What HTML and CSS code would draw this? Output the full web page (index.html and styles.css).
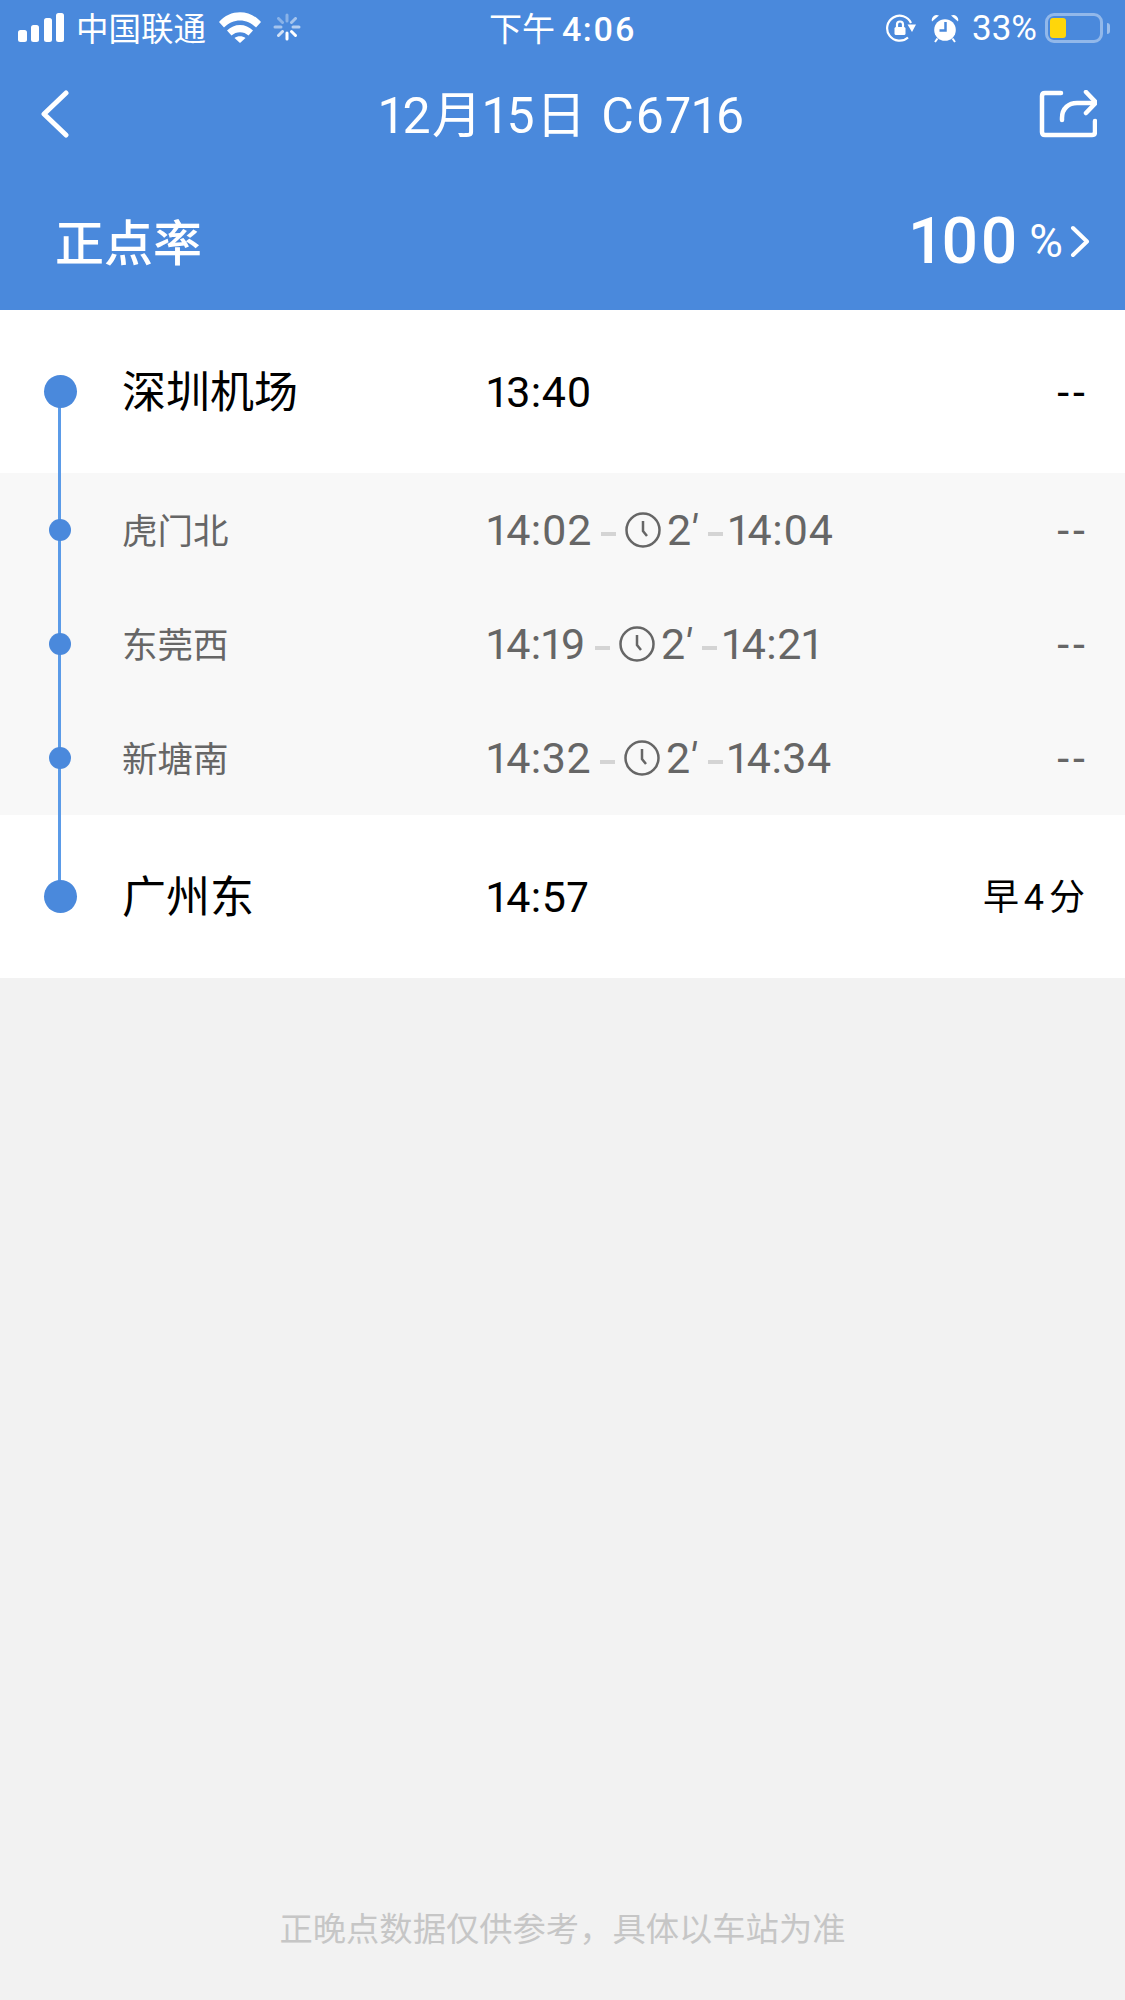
FILE: index.html

```html
<!DOCTYPE html>
<html lang="zh-CN">
<head>
<meta charset="utf-8">
<title>C6716</title>
<link rel="stylesheet" href="styles.css">
</head>
<body>

<div class="head">
    <div class="status">
        <div class="status-left">
            <svg class="ic-signal" width="47" height="30" viewBox="0 0 47 30">
                <rect x="0" y="17" width="9" height="12" rx="2.5"/>
                <rect x="13" y="12" width="8" height="17" rx="2.5"/>
                <rect x="26" y="5" width="8" height="24" rx="2.5"/>
                <rect x="38" y="0" width="8" height="29" rx="2.5"/>
            </svg>
            <span class="carrier">中国联通</span>
            <svg class="ic-wifi" width="42" height="31" viewBox="0 0 42 31" fill="#fff">
                <path d="M0 10 C11 -3 31 -3 42 10 L37 15.500 C28 6 14 6 5 15.500 Z"/>
                <path d="M8 18.500 C15 11 27 11 34 18.500 L29.500 23.500 C25 19 17 19 12.500 23.500 Z"/>
                <path d="M15.500 26 C18.500 23.500 23.500 23.500 26.500 26 L21 31 Z"/>
            </svg>
            <svg class="ic-spin" width="28" height="28" viewBox="0 0 28 28" stroke="#fff" stroke-width="3" stroke-linecap="round">
                <path d="M14 20 V26"/>
                <path d="M18.500 18.500 L22.500 22.500"/>
                <path d="M9.500 18.500 L5.500 22.500" opacity=".75"/>
                <path d="M20 14 H26" opacity=".6"/>
                <path d="M8 14 H2" opacity=".5"/>
                <path d="M18.500 9.500 L22.500 5.500" opacity=".5"/>
                <path d="M9.500 9.500 L5.500 5.500" opacity=".35"/>
                <path d="M14 8 V2" opacity=".35"/>
            </svg>
        </div>
        <div class="status-time">下午<span class="status-clock">4:06</span></div>
        <div class="status-right">
            <svg class="ic-lock" width="31" height="28" viewBox="0 0 31 28" fill="none" stroke="#fff" stroke-width="2.200">
                <path d="M22 23.500 A12.500 12.500 0 1 1 25 9"/>
                <path d="M21.500 10.500 H30 L26 18 Z" fill="#fff" stroke="none"/>
                <rect x="8.500" y="13" width="11" height="8" rx="1.500" fill="#fff" stroke="none"/>
                <path d="M11 13 V10.500 A3 3 0 0 1 17 10.500 V13"/>
            </svg>
            <svg class="ic-alarm" width="28" height="29" viewBox="0 0 28 29">
                <circle cx="14" cy="16" r="10.800" fill="#fff"/>
                <path d="M1 7.500 A5 5 0 0 1 8 1.500 Z M27 7.500 A5 5 0 0 0 20 1.500 Z" fill="#fff"/>
                <path d="M4 28 L6.500 24.500 M24 28 L21.500 24.500" stroke="#fff" stroke-width="2"/>
                <path d="M14.500 8 V16.500 H8.500" fill="none" stroke="#4a89dc" stroke-width="2.500"/>
            </svg>
            <span class="battery-pct">33%</span>
            <div class="battery"><div class="battery-fill"></div></div>
            <div class="battery-nub"></div>
        </div>
    </div>

    <div class="nav">
        <svg class="ic-back" width="28" height="48" viewBox="0 0 28 48" fill="none" stroke="#fff" stroke-width="5" stroke-linecap="round" stroke-linejoin="round">
            <path d="M25 3 L3 24 L25 45"/>
        </svg>
        <div class="nav-title">12月15日 C6716</div>
        <svg class="ic-share" width="58" height="48" viewBox="0 0 58 48" fill="none" stroke="#fff" stroke-width="4.500" stroke-linecap="round" stroke-linejoin="round">
            <path d="M22 3 H6 Q3 3 3 6 V42 Q3 45 6 45 H53 Q56 45 56 42 V31"/>
            <path d="M23 30 V28 C23 18 30 13 38 13 H55"/>
            <path d="M47 2 L57 12.500 L47 23"/>
        </svg>
    </div>

    <div class="rate">
        <div class="rate-label">正点率</div>
        <div class="rate-value">
            <span class="rate-num">100</span>
            <span class="rate-pct">%</span>
            <svg width="20" height="33" viewBox="0 0 20 33" fill="none" stroke="#fff" stroke-width="4" stroke-linecap="round" stroke-linejoin="round">
                <path d="M3 3 L17 16.500 L3 30"/>
            </svg>
        </div>
    </div>
</div>

<div class="stops">
    <div class="stops-line"></div>

    <div class="stop stop-main">
        <div class="dot"></div>
        <div class="stop-name">深圳机场</div>
        <div class="stop-time">13:40</div>
        <div class="stop-late">--</div>
    </div>

    <div class="stop stop-sub">
        <div class="dot"></div>
        <div class="stop-name">虎门北</div>
        <div class="stop-time">14:02<i class="dash"></i><svg class="clock" viewBox="0 0 36 36"><circle cx="18" cy="18" r="16.500"/><path d="M18 9 V19 L22 24"/></svg><span class="wait">2<span class="prime">′</span></span><i class="dash"></i><span>14:04</span></div>
        <div class="stop-late">--</div>
    </div>

    <div class="stop stop-sub">
        <div class="dot"></div>
        <div class="stop-name">东莞西</div>
        <div class="stop-time">14:19<i class="dash"></i><svg class="clock" viewBox="0 0 36 36"><circle cx="18" cy="18" r="16.500"/><path d="M18 9 V19 L22 24"/></svg><span class="wait">2<span class="prime">′</span></span><i class="dash"></i><span>14:21</span></div>
        <div class="stop-late">--</div>
    </div>

    <div class="stop stop-sub">
        <div class="dot"></div>
        <div class="stop-name">新塘南</div>
        <div class="stop-time">14:32<i class="dash"></i><svg class="clock" viewBox="0 0 36 36"><circle cx="18" cy="18" r="16.500"/><path d="M18 9 V19 L22 24"/></svg><span class="wait">2<span class="prime">′</span></span><i class="dash"></i><span>14:34</span></div>
        <div class="stop-late">--</div>
    </div>

    <div class="stop stop-main">
        <div class="dot"></div>
        <div class="stop-name">广州东</div>
        <div class="stop-time">14:57</div>
        <div class="stop-late stop-early">早 4 分</div>
    </div>
</div>

<div class="note">正晚点数据仅供参考，具体以车站为准</div>

</body>
</html>
```

FILE: styles.css

```css
html, body {
    margin: 0;
    padding: 0;
}

body {
    width: 1125px;
    height: 2000px;
    background-color: #f2f2f2;
    font-family: Roboto, "Noto Sans CJK SC", sans-serif;
    font-variant-numeric: proportional-nums;
    color: #000;
    display: flex;
    flex-direction: column;
    overflow: hidden;
}

.head {
    height: 310px;
    background-color: #4a89dc;
    color: #fff;
    flex-shrink: 0;
}

.status {
    height: 56px;
    padding: 0 18px;
    display: grid;
    grid-template-columns: 1fr auto 1fr;
    align-items: center;
    font-size: 33px;
}

.status-left, .status-right {
    display: flex;
    align-items: center;
}

.status-right {
    justify-content: flex-end;
    margin-right: -3px;
}

.ic-signal {
    fill: #fff;
}

.carrier {
    margin-left: 11px;
    margin-top: -3px;
    font-size: 32.500px;
}

.ic-wifi {
    margin-left: 13px;
    margin-top: -2px;
}

.ic-spin {
    margin-left: 12px;
    margin-top: -2px;
}

.status-time {
    font-size: 33px;
    margin-top: -3px;
}

.status-clock {
    margin-left: 7px;
    letter-spacing: 1.500px;
    font-size: 34px;
    font-weight: 500;
}

.ic-lock {
    margin-right: 14px;
}

.ic-alarm {
    margin-right: 13px;
}

.battery-pct {
    font-size: 35px;
    margin-right: 8px;
}

.battery {
    width: 58px;
    height: 30px;
    box-sizing: border-box;
    border: 3px solid rgba(255, 255, 255, .4);
    border-radius: 9px;
    padding: 2px;
}

.battery-fill {
    width: 16px;
    height: 20px;
    background-color: #ffd60a;
    border-radius: 3px;
}

.battery-nub {
    width: 3px;
    height: 11px;
    margin-left: 4px;
    background-color: rgba(255, 255, 255, .45);
    border-radius: 0 3px 3px 0;
}

.nav {
    height: 116px;
    padding: 0 28px;
    display: grid;
    grid-template-columns: 1fr auto 1fr;
    align-items: center;
}

.ic-back {
    margin-left: 13px;
}

.ic-share {
    justify-self: end;
}

.nav-title {
    font-size: 50px;
    letter-spacing: 1.400px;
    margin-top: -7px;
}

.rate {
    height: 136px;
    padding: 0 35px 0 55px;
    display: flex;
    align-items: center;
    justify-content: space-between;
}

.rate-label {
    font-size: 49px;
    font-weight: 500;
    margin-top: -2px;
}

.rate-value {
    display: flex;
    align-items: center;
    margin-top: 2px;
}

.rate-num {
    font-size: 64px;
    font-weight: 500;
    letter-spacing: 1.500px;
}

.rate-pct {
    font-size: 46px;
    margin-left: 10px;
    margin-right: 7px;
}

.stops {
    position: relative;
    flex-shrink: 0;
}

.stops-line {
    position: absolute;
    left: 58px;
    top: 82px;
    bottom: 82px;
    width: 3px;
    background-color: #5b9be8;
}

.stop {
    display: grid;
    grid-template-columns: 122px 365px 1fr auto;
    align-items: center;
    padding-right: 40px;
}

.stop-main {
    height: 163px;
    background-color: #fff;
    font-size: 43px;
}

.stop-sub {
    height: 114px;
    background-color: #f8f8f8;
    color: #666;
    font-size: 43px;
}

.dot {
    position: relative;
    background-color: #4a89dc;
    border-radius: 50%;
    width: 33px;
    height: 33px;
    margin-left: 44px;
}

.stop-sub .dot {
    width: 22px;
    height: 22px;
    margin-left: 49px;
}

.stop-name {
    font-size: 44px;
    margin-top: -5px;
}

.stop-sub .stop-name {
    font-size: 35.500px;
    margin-top: -3px;
}

.stop-time {
    display: flex;
    align-items: center;
    letter-spacing: .5px;
}

.dash {
    width: 15px;
    height: 4px;
    margin: 8px 9px 0 9px;
    background-color: #d4d4d4;
}

.wait + .dash {
    margin-left: 11px;
    margin-right: 5px;
}

.clock {
    width: 36px;
    height: 36px;
    fill: none;
    stroke: #666;
    stroke-width: 2.500;
}

.wait {
    margin-left: 6px;
}

.prime {
    font-style: italic;
    margin-left: -2px;
}

.stop-late {
    text-align: right;
    letter-spacing: 4px;
    margin-right: -4px;
}

.stop-early {
    font-size: 36px;
    letter-spacing: 0;
    margin-right: 0;
    word-spacing: -4px;
    margin-top: -5px;
}

.note {
    margin-top: auto;
    height: 70px;
    margin-bottom: 35px;
    line-height: 70px;
    text-align: center;
    font-size: 33.300px;
    color: #c6c6c6;
}
```
